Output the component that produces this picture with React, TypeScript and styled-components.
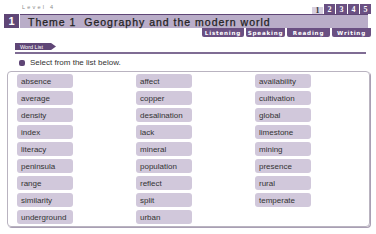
import styled, { createGlobalStyle } from "styled-components";

const GlobalStyle = createGlobalStyle`
  body {
    margin: 0;
    background: #ffffff;
    font-family: "Liberation Sans", Arial, sans-serif;
  }
`;

const purple = {
  dark: "#5f4676",
  tab: "#6a5082",
  bar: "#b9adc8",
  chip: "#d1c8db",
  line: "#7f6c94",
};

const Page = styled.div`
  width: 376px;
  height: 234px;
  display: flex;
  flex-direction: column;
`;

const TopRow = styled.div`
  display: flex;
  align-items: flex-end;
  justify-content: space-between;
  height: 14px;
  padding: 0 5px 0 22px;
  box-sizing: border-box;
`;

const LevelLabel = styled.span`
  font-size: 5.5px;
  letter-spacing: 2.2px;
  color: #8a8a8a;
  align-self: flex-start;
  margin-top: 4px;
`;

const NumberTabs = styled.div`
  display: flex;
  align-items: flex-end;
  gap: 1px;
`;

const NumberTab = styled.span<{ $active?: boolean }>`
  width: 11px;
  height: ${(p) => (p.$active ? "7px" : "10px")};
  display: flex;
  align-items: center;
  justify-content: center;
  font-family: "Liberation Serif", serif;
  font-weight: bold;
  font-size: 8px;
  color: ${(p) => (p.$active ? "#333" : "#fff")};
  background: ${(p) => (p.$active ? "#d8d0e0" : purple.tab)};
`;

const TitleBar = styled.div`
  display: flex;
  height: 14px;
  margin: 0 8px 0 4px;
`;

const ThemeNumber = styled.div`
  width: 15px;
  background: ${purple.dark};
  color: #fff;
  font-weight: bold;
  font-size: 11px;
  display: flex;
  align-items: center;
  justify-content: center;
`;

const ThemeTitle = styled.div`
  flex: 1;
  margin-left: 1px;
  background: ${purple.bar};
  border-top: 1px solid ${purple.dark};
  color: #1f1f1f;
  font-size: 10.5px;
  letter-spacing: 1px;
  padding-left: 8px;
  display: flex;
  align-items: center;
  white-space: pre;
  -webkit-text-stroke: 0.25px #1f1f1f;
`;

const SkillTabs = styled.div`
  display: flex;
  justify-content: flex-end;
  gap: 2px;
  height: 9px;
  margin-right: 5px;
`;

const SkillTab = styled.span<{ $w: number }>`
  width: ${(p) => p.$w}px;
  background: ${purple.tab};
  border-radius: 0 0 2px 2px;
  color: #fff;
  font-family: "DejaVu Sans", sans-serif;
  font-weight: bold;
  font-size: 5.6px;
  letter-spacing: 0.8px;
  display: flex;
  align-items: center;
  justify-content: center;
`;

const Section = styled.div`
  display: flex;
  flex-direction: column;
  align-items: flex-start;
  margin: 6px 10px 0 15px;
`;

const WordListTag = styled.span`
  display: flex;
  align-items: center;
  height: 7px;
  width: 36px;
  padding-left: 5px;
  background: ${purple.dark};
  color: #fff;
  font-size: 5.5px;
  clip-path: polygon(0 0, 88% 0, 100% 50%, 88% 100%, 0 100%);
`;

const Rule = styled.div`
  align-self: stretch;
  height: 2px;
  margin-top: 2px;
  background: ${purple.line};
`;

const Instruction = styled.div`
  display: flex;
  align-items: center;
  gap: 5px;
  height: 9px;
  margin: 4px 0 0 19px;
  font-size: 8px;
  color: #333;
`;

const Bullet = styled.span`
  width: 6px;
  height: 6px;
  border-radius: 2px;
  background: ${purple.dark};
`;

const WordBox = styled.div`
  margin: 4px 6px 0 7px;
  height: 156px;
  box-sizing: border-box;
  border: 1px solid #b9b3c0;
  border-radius: 4px;
  box-shadow: 1px 1px 0 #a99fb4;
  padding: 2px 9px;
  display: grid;
  grid-auto-flow: column;
  grid-template-rows: repeat(9, 14px);
  grid-template-columns: repeat(3, 56px);
  row-gap: 3px;
  column-gap: 63px;
`;

const Chip = styled.span`
  background: ${purple.chip};
  border-radius: 3px;
  font-size: 8px;
  color: #333;
  padding-left: 4px;
  display: flex;
  align-items: center;
`;

const words = [
  "absence", "average", "density", "index", "literacy", "peninsula", "range", "similarity", "underground",
  "affect", "copper", "desalination", "lack", "mineral", "population", "reflect", "split", "urban",
  "availability", "cultivation", "global", "limestone", "mining", "presence", "rural", "temperate",
];

const skills: [string, number][] = [
  ["Listening", 42],
  ["Speaking", 39],
  ["Reading", 43],
  ["Writing", 39],
];

export default function App() {
  return (
    <Page>
      <GlobalStyle />
      <TopRow>
        <LevelLabel>Level 4</LevelLabel>
        <NumberTabs>
          {[1, 2, 3, 4, 5].map((n) => (
            <NumberTab key={n} $active={n === 1}>
              {n}
            </NumberTab>
          ))}
        </NumberTabs>
      </TopRow>
      <TitleBar>
        <ThemeNumber>1</ThemeNumber>
        <ThemeTitle>{"Theme 1  Geography and the modern world"}</ThemeTitle>
      </TitleBar>
      <SkillTabs>
        {skills.map(([s, w]) => (
          <SkillTab key={s} $w={w}>
            {s}
          </SkillTab>
        ))}
      </SkillTabs>
      <Section>
        <WordListTag>Word List</WordListTag>
        <Rule />
      </Section>
      <Instruction>
        <Bullet />
        Select from the list below.
      </Instruction>
      <WordBox>
        {words.map((w) => (
          <Chip key={w}>{w}</Chip>
        ))}
      </WordBox>
    </Page>
  );
}
